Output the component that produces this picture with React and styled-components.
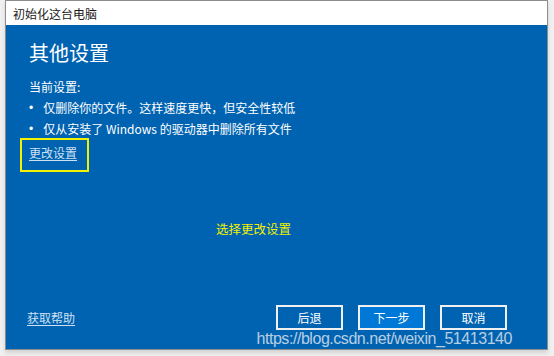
import React from "react";
import styled, { createGlobalStyle } from "styled-components";

const GlobalStyle = createGlobalStyle`
  html, body {
    margin: 0;
    padding: 0;
    background: #f0f0f0;
    font-family: "Noto Sans CJK SC", "Noto Sans", sans-serif;
  }
`;

const Stage = styled.div`
  width: 554px;
  height: 356px;
  padding-left: 5px;
  box-sizing: border-box;
  overflow: hidden;
`;

const Window = styled.div`
  position: relative;
  width: 543px;
  height: 350px;
  box-sizing: border-box;
  border: 1px solid #8c8c8c;
  display: flex;
  flex-direction: column;
  box-shadow: 0 3px 4px rgba(0, 0, 0, 0.12);
`;

const TitleBar = styled.div`
  height: 24px;
  flex: none;
  background: #fff;
  display: flex;
  align-items: center;
  padding-left: 7px;
  font-size: 12px;
  color: #1a1a1a;
`;

const Panel = styled.div`
  flex: 1;
  background: #0063b1;
  color: #fff;
  display: flex;
  flex-direction: column;
  padding: 14px 40px 19px 23px;
  font-size: 12px;
  line-height: 20px;
`;

const Heading = styled.h1`
  margin: 0;
  font-size: 20px;
  line-height: 28px;
  font-weight: 400;
`;

const Label = styled.div`
  margin-top: 10px;
`;

const List = styled.ul`
  margin: 1px 0 0;
  padding: 0;
  list-style: none;
  display: flex;
  flex-direction: column;
  gap: 1px;
`;

const Item = styled.li`
  display: flex;
  gap: 10px;

  &::before {
    content: "•";
    font-family: "Liberation Sans", sans-serif;
  }
`;

const LinkWrap = styled.div`
  position: relative;
  margin-top: 4px;
  align-self: flex-start;
  height: 20px;
`;

const Link = styled.a`
  color: #cfe0f2;
  text-decoration: underline;
  text-underline-offset: 2px;
  cursor: pointer;
`;

const Highlight = styled.span`
  position: absolute;
  left: -9px;
  top: -5px;
  width: 69px;
  height: 34px;
  box-sizing: border-box;
  border: 2px solid #f2f200;
  pointer-events: none;
`;

const Note = styled.div`
  margin-top: 56px;
  margin-left: 187px;
  font-size: 12.5px;
  color: #f0f000;
`;

const Footer = styled.div`
  margin-top: auto;
  display: flex;
  align-items: center;
  gap: 15px;
`;

const Help = styled(Link)`
  margin-left: -2px;
  margin-right: auto;
`;

const Button = styled.button`
  width: 67px;
  height: 25px;
  box-sizing: border-box;
  border: 2px solid #f0f0f0;
  background: ${(p) => (p.$primary ? "#0078d7" : "transparent")};
  color: #fff;
  font-family: inherit;
  font-size: 12px;
  padding: 0;
  cursor: pointer;
`;

const Watermark = styled.div`
  position: absolute;
  right: 35px;
  bottom: 1px;
  font-family: "Liberation Sans", Arial, sans-serif;
  font-size: 16px;
  letter-spacing: -0.45px;
  color: rgba(225, 232, 240, 0.82);
  pointer-events: none;
`;

export default function App() {
  return (
    <>
      <GlobalStyle />
      <Stage>
        <Window>
          <TitleBar>初始化这台电脑</TitleBar>
          <Panel>
            <Heading>其他设置</Heading>
            <Label>当前设置:</Label>
            <List>
              <Item>仅删除你的文件。这样速度更快，但安全性较低</Item>
              <Item>仅从安装了 Windows 的驱动器中删除所有文件</Item>
            </List>
            <LinkWrap>
              <Link>更改设置</Link>
              <Highlight />
            </LinkWrap>
            <Note>选择更改设置</Note>
            <Footer>
              <Help>获取帮助</Help>
              <Button>后退</Button>
              <Button $primary>下一步</Button>
              <Button>取消</Button>
            </Footer>
          </Panel>
          <Watermark>https://blog.csdn.net/weixin_51413140</Watermark>
        </Window>
      </Stage>
    </>
  );
}
